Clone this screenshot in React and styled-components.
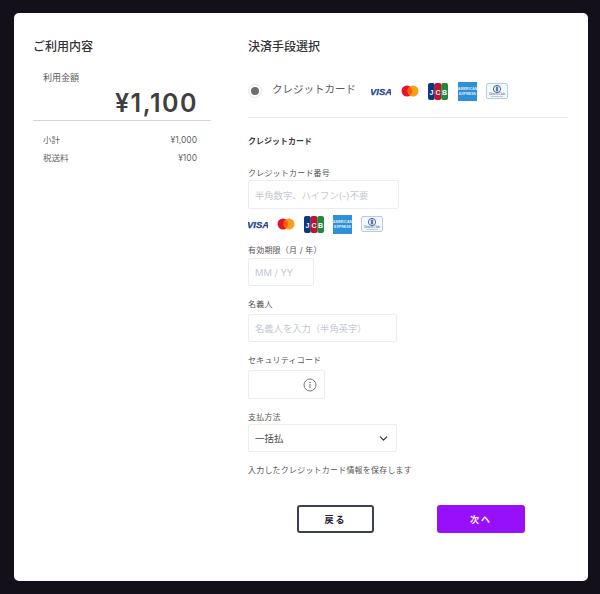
import styled, { createGlobalStyle } from "styled-components";
import { ChevronDown } from "lucide-react";

const GlobalStyle = createGlobalStyle`
    html, body {
        margin: 0;
        padding: 0;
        background-color: #14101a;
    }
    * {
        box-sizing: border-box;
    }
`;

const Page = styled.div`
    width: 600px;
    height: 594px;
    padding: 13px 12px 13px 14px;
    font-family: "Inter", "Noto Sans CJK JP", sans-serif;
    color: #3c3c3c;
`;

const Card = styled.main`
    display: flex;
    height: 568px;
    padding: 25px 20px 0 19px;
    background-color: #fff;
    border-radius: 5px;
`;

const LeftColumn = styled.section`
    width: 178px;
    margin-right: 37px;
`;

const RightColumn = styled.section`
    flex-grow: 1;
`;

const Heading = styled.h2`
    margin: 0;
    height: 18px;
    font-size: 12px;
    line-height: 18px;
    font-weight: 500;
    color: #333;
`;

const AmountLabel = styled.div`
    margin: 15px 0 0 10px;
    font-size: 9px;
    line-height: 13px;
    color: #5c5c5c;
`;

const Amount = styled.div`
    padding-right: 13px;
    margin-top: 2px;
    height: 34px;
    text-align: right;
    font-size: 25px;
    line-height: 34px;
    font-weight: 600;
    letter-spacing: 1.5px;
    color: #3f3f3f;
`;

const Divider = styled.hr`
    margin: 0;
    border: 0;
    border-top: 1px solid ${(props) => props.$color || "#dcdcdc"};
`;

const SummaryList = styled.div`
    display: flex;
    flex-direction: column;
    gap: 5px;
    padding: 13px 14px 0 10px;
`;

const SummaryRow = styled.div`
    display: flex;
    justify-content: space-between;
    font-size: 8.5px;
    line-height: 13px;
    color: #666;
`;

const MethodRow = styled.div`
    display: flex;
    align-items: center;
    height: 30px;
    margin-top: 20px;
    margin-bottom: 11px;
`;

const Radio = styled.span`
    display: flex;
    align-items: center;
    justify-content: center;
    width: 14px;
    height: 14px;
    margin-right: 10px;
    border: 1px solid #e6e6e6;
    border-radius: 50%;

    &::after {
        content: "";
        width: 8px;
        height: 8px;
        border-radius: 50%;
        background-color: #6e6e6e;
    }
`;

const MethodLabel = styled.span`
    width: 99px;
    margin-top: -3px;
    font-size: 10.5px;
    line-height: 16px;
    color: #5c5c5c;
`;

const SectionTitle = styled.h3`
    margin: 17px 0 20px;
    height: 12px;
    font-size: 8px;
    line-height: 12px;
    font-weight: 700;
    color: #3c3c3c;
`;

const Field = styled.div`
    margin-top: ${(props) => props.$top || 0}px;
`;

const Label = styled.label`
    display: block;
    height: 12px;
    font-size: 8px;
    line-height: 12px;
    letter-spacing: 0.2px;
    color: #555;
`;

const InputBox = styled.div`
    display: flex;
    align-items: center;
    justify-content: space-between;
    width: ${(props) => props.$width}px;
    height: ${(props) => props.$height || 29}px;
    margin-top: ${(props) => props.$gap ?? 3}px;
    padding: 0 6px;
    border: 1px solid #ebedf0;
    border-radius: 2px;
    font-size: 9.3px;
`;

const Placeholder = styled.span`
    color: #c3c8d2;
`;

const SelectValue = styled.span`
    font-size: 9.5px;
    color: #4a4a4a;
`;

const LogoRow = styled.div`
    display: flex;
    align-items: center;
    gap: ${(props) => props.$gap || 8}px;
`;

const FormLogos = styled.div`
    display: flex;
    align-items: center;
    height: 18px;
    margin-top: 6px;
`;

const SaveNote = styled.p`
    margin: 12px 0 0;
    height: 12px;
    font-size: 8px;
    line-height: 12px;
    letter-spacing: 0.2px;
    color: #555;
`;

const Actions = styled.div`
    display: flex;
    gap: 63px;
    margin-top: 29px;
    padding-left: 49px;
`;

const BackButton = styled.button`
    width: 77px;
    height: 28px;
    padding: 0;
    background-color: #fff;
    border: 2px solid #3a4058;
    border-radius: 3px;
    font-family: inherit;
    font-size: 9px;
    font-weight: 700;
    letter-spacing: 2px;
    color: #1d2338;
`;

const NextButton = styled.button`
    width: 88px;
    height: 28px;
    padding: 0;
    background-color: #9810fa;
    border: 0;
    border-radius: 3px;
    font-family: inherit;
    font-size: 9px;
    font-weight: 700;
    letter-spacing: 2px;
    color: #fff;
`;

function VisaLogo() {
    return (
        <svg width="20" height="10" viewBox="0 0 20 10">
            <text x="10" y="8.5" textAnchor="middle" fontFamily="Liberation Sans" fontStyle="italic" fontWeight="700" fontSize="9.5" stroke="#21409a" strokeWidth="0.25" fill="#21409a">VISA</text>
        </svg>
    );
}

function MasterLogo() {
    return (
        <svg width="18" height="12" viewBox="0 0 18 12">
            <circle cx="6" cy="6" r="5.5" fill="#e8112d" />
            <circle cx="12" cy="6" r="5.5" fill="#f79e1b" />
            <path d="M9 1.6a5.5 5.5 0 0 1 0 8.8a5.5 5.5 0 0 1 0-8.8z" fill="#ff5f00" />
        </svg>
    );
}

function JcbLogo() {
    return (
        <svg width="20" height="17" viewBox="0 0 20 17">
            <rect x="0" y="0" width="6.8" height="17" rx="2" fill="#0b3a7e" />
            <rect x="6.6" y="0" width="6.8" height="17" rx="2" fill="#c4122f" />
            <rect x="13.2" y="0" width="6.8" height="17" rx="2" fill="#1f8a3d" />
            <text x="3.5" y="11.5" textAnchor="middle" fontFamily="Liberation Sans" fontWeight="700" fontSize="7" fill="#fff">J</text>
            <text x="10" y="11.5" textAnchor="middle" fontFamily="Liberation Sans" fontWeight="700" fontSize="7" fill="#fff">C</text>
            <text x="16.5" y="11.5" textAnchor="middle" fontFamily="Liberation Sans" fontWeight="700" fontSize="7" fill="#fff">B</text>
        </svg>
    );
}

function AmexLogo() {
    return (
        <svg width="19" height="19" viewBox="0 0 19 19">
            <rect width="19" height="19" fill="#2f8fd8" />
            <text x="9.5" y="8" textAnchor="middle" fontFamily="Liberation Sans" fontWeight="700" fontSize="3.6" fill="#dff0fb">AMERICAN</text>
            <text x="9.5" y="12.5" textAnchor="middle" fontFamily="Liberation Sans" fontWeight="700" fontSize="3.6" fill="#dff0fb">EXPRESS</text>
        </svg>
    );
}

function DinersLogo() {
    return (
        <svg width="22" height="16" viewBox="0 0 22 16">
            <rect x="0.5" y="0.5" width="21" height="15" rx="1.5" fill="#f4f7fb" stroke="#b9cbe0" />
            <circle cx="11" cy="6" r="3.6" fill="#fff" stroke="#3c6aa3" />
            <path d="M10.3 3.6v4.8M11.7 3.6v4.8" stroke="#1e4a85" strokeWidth="0.9" />
            <text x="11" y="12" textAnchor="middle" fontFamily="Liberation Serif" fontSize="3.2" fill="#3a4f6b">Diners Club</text>
            <path d="M5 13.5h12" stroke="#8fa3bc" strokeWidth="0.5" />
        </svg>
    );
}

function CardLogos({ gap }) {
    return (
        <LogoRow $gap={gap}>
            <VisaLogo />
            <MasterLogo />
            <JcbLogo />
            <AmexLogo />
            <DinersLogo />
        </LogoRow>
    );
}

function InfoIcon() {
    return (
        <svg width="15" height="14" viewBox="0 0 15 14" fill="none" stroke="#777" strokeWidth="1">
            <circle cx="7" cy="7" r="6" />
            <path d="M7 6.3v3.4" strokeLinecap="round" />
            <circle cx="7" cy="4.4" r="0.4" fill="#777" />
        </svg>
    );
}

export default function App() {
    return (
        <Page>
            <GlobalStyle />
            <Card>
                <LeftColumn>
                    <Heading>ご利用内容</Heading>
                    <AmountLabel>利用金額</AmountLabel>
                    <Amount>¥1,100</Amount>
                    <Divider $color="#d4d4d4" />
                    <SummaryList>
                        <SummaryRow><span>小計</span><span>¥1,000</span></SummaryRow>
                        <SummaryRow><span>税送料</span><span>¥100</span></SummaryRow>
                    </SummaryList>
                </LeftColumn>
                <RightColumn>
                    <Heading>決済手段選択</Heading>
                    <MethodRow>
                        <Radio />
                        <MethodLabel>クレジットカード</MethodLabel>
                        <CardLogos gap={9.5} />
                    </MethodRow>
                    <Divider $color="#ebebeb" />
                    <SectionTitle>クレジットカード</SectionTitle>
                    <Field $top={7}>
                        <Label>クレジットカード番号</Label>
                        <InputBox $width={151} $gap={1}><Placeholder>半角数字、ハイフン(-)不要</Placeholder></InputBox>
                    </Field>
                    <FormLogos><CardLogos gap={9} /></FormLogos>
                    <Field $top={11}>
                        <Label>有効期限（月 / 年）</Label>
                        <InputBox $width={66} $height={28} $gap={2}><Placeholder>MM / YY</Placeholder></InputBox>
                    </Field>
                    <Field $top={12}>
                        <Label>名義人</Label>
                        <InputBox $width={149} $height={28} $gap={4}><Placeholder>名義人を入力（半角英字）</Placeholder></InputBox>
                    </Field>
                    <Field $top={12}>
                        <Label>セキュリティコード</Label>
                        <InputBox $width={77} $gap={4}><span /><InfoIcon /></InputBox>
                    </Field>
                    <Field $top={12}>
                        <Label>支払方法</Label>
                        <InputBox $width={149} $height={28} $gap={1}>
                            <SelectValue>一括払</SelectValue>
                            <ChevronDown size={13} color="#333" strokeWidth={2.2} />
                        </InputBox>
                    </Field>
                    <SaveNote>入力したクレジットカード情報を保存します</SaveNote>
                    <Actions>
                        <BackButton>戻る</BackButton>
                        <NextButton>次へ</NextButton>
                    </Actions>
                </RightColumn>
            </Card>
        </Page>
    );
}
